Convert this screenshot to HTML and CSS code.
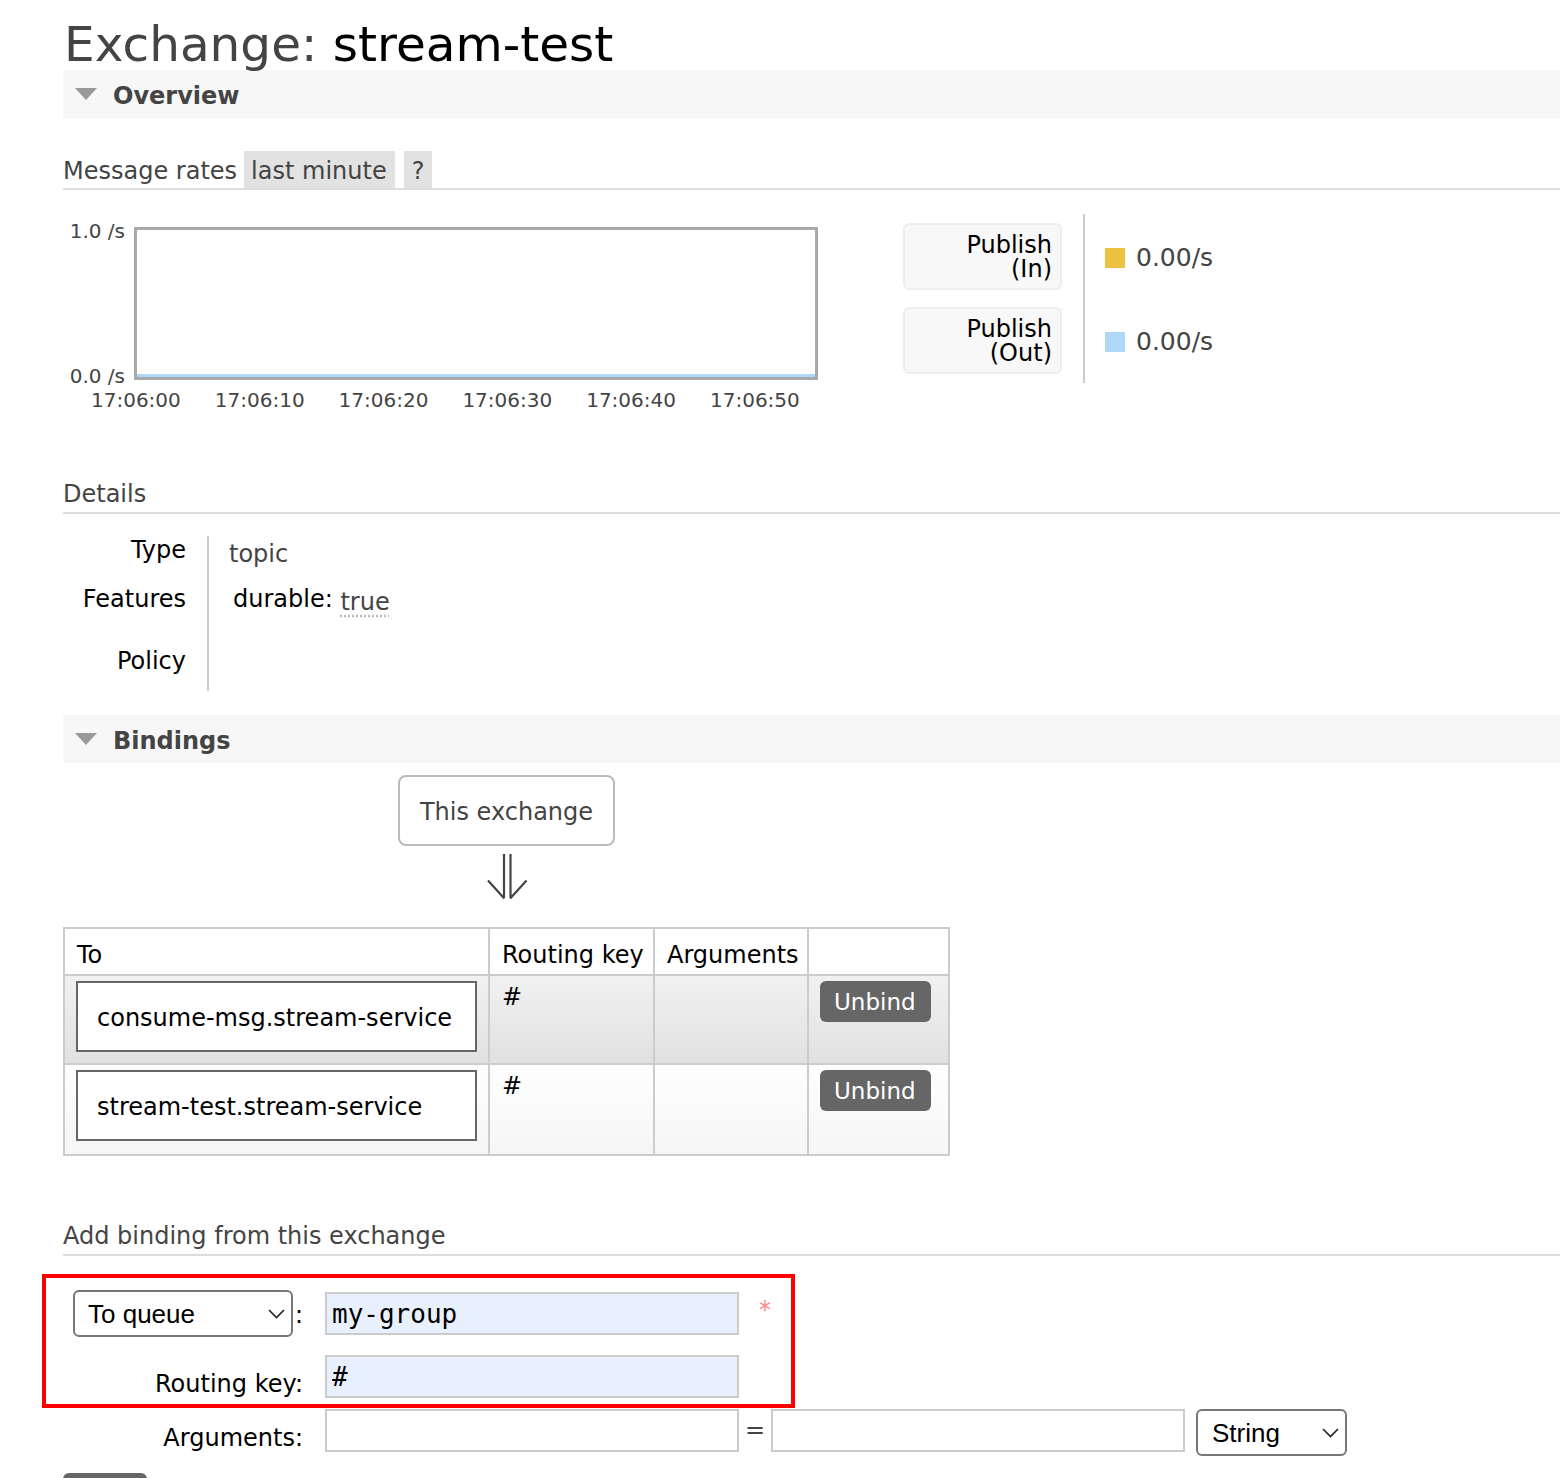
FILE: index.html
```html
<!DOCTYPE html>
<html>
<head>
<meta charset="utf-8">
<title>Exchange: stream-test</title>
<link rel="stylesheet" href="styles.css">
</head>
<body>
<div class="main">
  <h1 class="title">Exchange: <b>stream-test</b></h1>

  <div class="section-head"><span class="tri"></span><span class="section-title">Overview</span></div>

  <div class="rates-head">
    <span class="rates-title">Message rates</span>
    <span class="pill">last minute</span>
    <span class="pill q">?</span>
  </div>

  <div class="chart-row">
    <div class="chart">
      <div class="yaxis"><span>1.0 /s</span><span>0.0 /s</span></div>
      <div class="plot"><div class="fill"></div></div>
      <div class="xaxis">
        <span>17:06:00</span><span>17:06:10</span><span>17:06:20</span><span>17:06:30</span><span>17:06:40</span><span>17:06:50</span>
      </div>
    </div>
    <div class="legend">
      <div class="legend-labels">
        <div class="legend-label"><span>Publish</span><span>(In)</span></div>
        <div class="legend-label"><span>Publish</span><span>(Out)</span></div>
      </div>
      <div class="legend-values">
        <div class="legend-value"><span class="swatch yellow"></span>0.00/s</div>
        <div class="legend-value"><span class="swatch blue"></span>0.00/s</div>
      </div>
    </div>
  </div>

  <h2 class="sub">Details</h2>
  <div class="details">
    <div class="dl r1">Type</div><div class="dv r1"><span class="muted pad4">topic</span></div>
    <div class="dl r2">Features</div><div class="dv r2"><span class="feat">durable: <span class="flag">true</span></span></div>
    <div class="dl r3">Policy</div><div class="dv r3"></div>
  </div>

  <div class="section-head bind-head"><span class="tri"></span><span class="section-title">Bindings</span></div>

  <div class="bindings">
    <div class="this-ex">This exchange</div>
    <svg class="darr" width="42" height="48" viewBox="0 0 42 48">
      <path d="M18 2 V46 M24.5 2 V46 M2 28.5 L18.3 46.5 M40.5 28.5 L24.2 46.5" fill="none" stroke="#444" stroke-width="2.2"/>
    </svg>
    <table class="btable">
      <colgroup><col class="c1"><col class="c2"><col class="c3"><col class="c4"></colgroup>
      <thead>
        <tr><th>To</th><th>Routing key</th><th>Arguments</th><th></th></tr>
      </thead>
      <tbody>
        <tr class="alt1">
          <td><span class="qbox">consume-msg.stream-service</span></td>
          <td class="rk">#</td>
          <td></td>
          <td><button class="btn">Unbind</button></td>
        </tr>
        <tr class="alt2">
          <td><span class="qbox">stream-test.stream-service</span></td>
          <td class="rk">#</td>
          <td></td>
          <td><button class="btn">Unbind</button></td>
        </tr>
      </tbody>
    </table>
  </div>

  <h2 class="sub add-head">Add binding from this exchange</h2>

  <form class="bform">
    <div class="frow row1">
      <div class="flabel">
        <span class="sel-wrap sel-dest">
          <select class="sel"><option>To queue</option><option>To exchange</option></select>
          <svg class="chev" width="17" height="10" viewBox="0 0 17 10"><path d="M1 1 L8.5 8.5 L16 1" fill="none" stroke="#222" stroke-width="1.6"/></svg>
        </span><span class="colon">:</span>
      </div>
      <input class="inp filled mono" type="text" value="my-group">
      <span class="mand">*</span>
    </div>
    <div class="frow row2">
      <div class="flabel lbl">Routing key:</div>
      <input class="inp filled mono" type="text" value="#">
    </div>
    <div class="frow row3">
      <div class="flabel lbl">Arguments:</div>
      <input class="inp" type="text" value="">
      <span class="eq">=</span>
      <input class="inp" type="text" value="">
      <span class="sel-wrap sel-type">
        <select class="sel"><option>String</option><option>Number</option><option>Boolean</option><option>List</option></select>
        <svg class="chev" width="17" height="10" viewBox="0 0 17 10"><path d="M1 1 L8.5 8.5 L16 1" fill="none" stroke="#222" stroke-width="1.6"/></svg>
      </span>
    </div>
    <div class="annot"></div>
    <button type="button" class="btn bind">Bind</button>
  </form>
</div>
</body>
</html>
```

FILE: styles.css
```css
html, body {
  margin: 0;
  padding: 0;
  background: #fff;
}
body {
  font-family: "DejaVu Sans", Verdana, sans-serif;
  font-size: 24px;
  line-height: 28px;
  color: #000;
}
.main {
  padding-left: 63px;
}
.title {
  margin: 19px 0 0 1px;
  font-size: 48.5px;
  line-height: 51px;
  font-weight: normal;
  color: #444;
  white-space: nowrap;
}
.title b {
  font-weight: normal;
  color: #000;
}

/* collapsible section header */
.section-head {
  display: flex;
  align-items: center;
  height: 48px;
  box-sizing: border-box;
  padding-top: 3px;
  background: #f7f7f7;
}
.tri {
  width: 0;
  height: 0;
  border-left: 11px solid transparent;
  border-right: 11px solid transparent;
  border-top: 12px solid #999;
  margin-left: 12px;
  margin-top: -4px;
}
.section-title {
  margin-left: 16px;
  font-weight: bold;
  color: #444;
  line-height: 45px;
  padding-top: 2px;
}

/* message rates header */
.rates-head {
  display: flex;
  align-items: flex-end;
  margin-top: 33px;
  border-bottom: 2px solid #ddd;
  color: #444;
  line-height: 34px;
}
.rates-title {
  margin-right: 7px;
  padding-top: 3px;
}
.pill {
  background: #e2e2e2;
  padding: 3px 8px 0 7px;
  margin-right: 9px;
}
.pill.q {
  padding: 3px 8px 0;
}

/* chart */
.chart-row {
  display: flex;
  align-items: flex-start;
  margin-top: 24px;
}
.chart {
  display: grid;
  grid-template-columns: 71px 684px;
  margin-top: 13px;
}
.yaxis {
  display: flex;
  flex-direction: column;
  justify-content: space-between;
  align-items: flex-end;
  padding-right: 9px;
  margin-top: -8px;
  margin-bottom: -8px;
  font-size: 20px;
  line-height: 24px;
  color: #444;
}
.plot {
  height: 153px;
  box-sizing: border-box;
  border: 3px solid #a9a9a9;
  display: flex;
  flex-direction: column;
  justify-content: flex-end;
  background: #fff;
}
.fill {
  height: 3px;
  background: #afd8f8;
}
.xaxis {
  grid-column: 1 / span 2;
  display: flex;
  margin-left: 11px;
  margin-top: 8px;
  font-size: 20px;
  line-height: 24px;
  color: #444;
}
.xaxis span {
  width: 123.8px;
  text-align: center;
}
.legend {
  display: flex;
  margin-left: 85px;
}
.legend-labels {
  display: flex;
  flex-direction: column;
  gap: 17px;
  padding: 9px 0;
}
.legend-label {
  width: 159px;
  height: 67px;
  box-sizing: border-box;
  border: 2px solid #eee;
  border-radius: 6px;
  background: #f8f8f8;
  padding-right: 8px;
  display: flex;
  flex-direction: column;
  align-items: flex-end;
  justify-content: center;
  line-height: 24px;
}
.legend-values {
  margin-left: 21px;
  border-left: 2px solid #ccc;
  padding: 9px 0 8px 20px;
  display: flex;
  flex-direction: column;
  gap: 17px;
}
.legend-value {
  height: 67px;
  display: flex;
  align-items: center;
  font-size: 25px;
  color: #444;
  padding-top: 2px;
  box-sizing: border-box;
}
.swatch {
  width: 20px;
  height: 20px;
  margin-right: 11px;
}
.swatch.yellow { background: #edc240; }
.swatch.blue { background: #afd8f8; }

/* sub headings */
.sub {
  margin: 0;
  font-size: 24px;
  font-weight: normal;
  line-height: 28px;
  color: #444;
  border-bottom: 2px solid #ddd;
  padding-bottom: 4px;
}
.chart-row + .sub {
  margin-top: 68px;
}

/* details */
.details {
  display: grid;
  grid-template-columns: 144px 1fr;
  margin-top: 22px;
}
.dl {
  text-align: right;
  padding-right: 21px;
}
.dv {
  border-left: 2px solid #ccc;
  padding-left: 20px;
}
.r1 { height: 48px; }
.r2 { height: 62px; }
.r3 { height: 44px; }
.dl.r2 { padding-top: 1px; }
.dv.r2 { padding-top: 1px; }
.muted { color: #444; }
.pad4 {
  display: inline-block;
  padding-top: 4px;
}
.feat {
  display: inline-block;
  padding-left: 4px;
}
.flag {
  display: inline-block;
  vertical-align: -3px;
  color: #444;
  text-decoration: underline dotted #bbb;
  text-underline-offset: 5px;
}

.bind-head {
  margin-top: 24px;
}

/* bindings */
.bindings {
  width: 884px;
  display: flex;
  flex-direction: column;
  align-items: center;
}
.this-ex {
  margin-top: 12px;
  height: 71px;
  box-sizing: border-box;
  border: 2px solid #bbb;
  border-radius: 8px;
  padding: 2px 20px 0;
  display: flex;
  align-items: center;
  color: #444;
  margin-left: 3px;
}
.darr {
  display: block;
  margin-top: 6px;
  margin-left: 3px;
}
.btable {
  align-self: flex-start;
  margin-top: 27px;
  margin-left: 0;
  width: 885px;
  table-layout: fixed;
  border-collapse: collapse;
  border: 2px solid #ccc;
  white-space: nowrap;
}
.btable col.c1 { width: 425px; }
.btable col.c2 { width: 165px; }
.btable col.c3 { width: 154px; }
.btable col.c4 { width: 141px; }
.btable th,
.btable td {
  border: 2px solid #ccc;
  text-align: left;
  vertical-align: top;
}
.btable th {
  font-weight: normal;
  height: 47px;
  box-sizing: border-box;
  padding: 12px 11px 0 12px;
  background: #fff;
}
.btable td {
  padding: 5px 11px 11px 11px;
}
.alt2 td {
  padding-bottom: 13px;
}
.btable td.rk {
  padding-top: 7px;
  padding-left: 12px;
}
.alt1 td {
  background: linear-gradient(#f1f1f1, #e1e1e1);
}
.alt2 td {
  background: linear-gradient(#fefefe, #f6f6f6);
}
.qbox {
  display: flex;
  align-items: center;
  height: 71px;
  box-sizing: border-box;
  border: 2px solid #666;
  background: #fff;
  padding: 2px 0 0 19px;
}
.btn {
  font-family: "DejaVu Sans", Verdana, sans-serif;
  font-size: 23px;
  line-height: 28px;
  color: #fff;
  background: #666;
  border: none;
  border-radius: 6px;
  height: 41px;
  padding: 0 15px 0 14px;
  margin: 0;
}

.add-head {
  margin-top: 66px;
}

/* form */
.bform {
  position: relative;
  margin-top: 34px;
}
.frow {
  display: flex;
  align-items: flex-start;
}
.flabel {
  width: 240px;
  flex: none;
  display: flex;
  justify-content: flex-end;
  text-align: right;
}
.row1 {
  align-items: center;
}
.row1 .flabel {
  justify-content: flex-start;
  align-items: center;
}
.row2 {
  margin-top: 18px;
}
.row3 {
  margin-top: 11px;
  align-items: flex-start;
}
.lbl {
  padding-top: 15px;
}
.colon {
  margin-left: 2px;
  padding-top: 2px;
}
.sel-wrap {
  position: relative;
  display: inline-block;
}
.sel {
  -webkit-appearance: none;
  appearance: none;
  font-family: "Liberation Sans", Arial, sans-serif;
  font-size: 26px;
  color: #000;
  background: #fff;
  border: 2px solid #777;
  border-radius: 6px;
  box-sizing: border-box;
  margin: 0;
  display: block;
}
.sel-dest {
  margin-left: 10px;
}
.sel-dest .sel {
  width: 220px;
  height: 47px;
  padding: 0 0 0 13px;
}
.sel-type {
  margin-left: 11px;
}
.sel-type .sel {
  width: 151px;
  height: 47px;
  padding: 0 0 0 14px;
}
.chev {
  position: absolute;
  right: 8px;
  top: 19px;
  pointer-events: none;
}
.inp {
  display: block;
  margin: 0 0 0 22px;
  width: 414px;
  height: 43px;
  box-sizing: border-box;
  border: 2px solid #ccc;
  background: #fff;
  font-family: "DejaVu Sans", Verdana, sans-serif;
  font-size: 24px;
  padding: 0 5px;
  color: #000;
}
.inp.filled {
  background: #e8f0fe;
}
.inp.mono {
  font-family: "DejaVu Sans Mono", "Liberation Mono", monospace;
  font-size: 26px;
}
.mand {
  align-self: flex-start;
  margin-left: 20px;
  margin-top: 6px;
  color: #f88;
  font-size: 24px;
}
.eq {
  width: 32px;
  text-align: center;
  color: #444;
  padding-top: 7px;
}
.row3 .eq + .inp {
  margin-left: 0;
}
.annot {
  position: absolute;
  left: -21px;
  top: -16px;
  width: 753px;
  height: 134px;
  box-sizing: border-box;
  border: 4px solid #f00;
  pointer-events: none;
}
.bind {
  margin-top: 17px;
  width: 84px;
  display: block;
}
```
